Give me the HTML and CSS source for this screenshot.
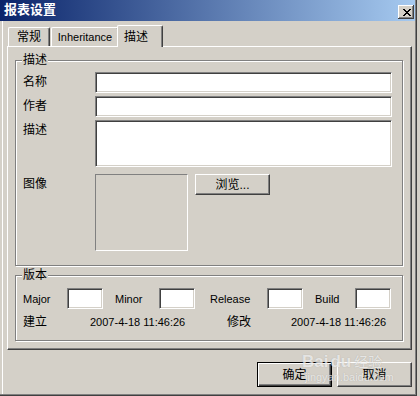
FILE: index.html
```html
<!DOCTYPE html>
<html lang="zh">
<head>
    <meta charset="UTF-8">
    <title>报表设置</title>
    <link rel="stylesheet" href="styles.css">
</head>
<body>
    <div class="window">
        <div class="titlebar">
            <span class="title">报表设置</span>
            <span class="close">
                <svg width="8" height="7" viewBox="0 0 8 7" shape-rendering="crispEdges"><path d="M0 0h2v1H0zM6 0h2v1H6zM1 1h2v1H1zM5 1h2v1H5zM2 2h4v1H2zM3 3h2v1H3zM2 4h4v1H2zM1 5h2v1H1zM5 5h2v1H5zM0 6h2v1H0zM6 6h2v1H6z"/></svg>
            </span>
        </div>

        <div class="tabs">
            <div class="tab tab-general">常规</div>
            <div class="tab tab-inherit en">Inheritance</div>
            <div class="tab tab-active">描述</div>
        </div>

        <div class="panel">
            <div class="group group-desc">
                <span class="legend">描述</span>
                <div class="desc-grid">
                    <label class="lbl">名称</label>
                    <div class="edit"></div>
                    <label class="lbl">作者</label>
                    <div class="edit"></div>
                    <label class="lbl">描述</label>
                    <div class="edit memo"></div>
                    <label class="lbl img-lbl">图像</label>
                    <div class="img-row">
                        <div class="picture"></div>
                        <button class="btn browse">浏览...</button>
                    </div>
                </div>
            </div>

            <div class="group group-ver">
                <span class="legend">版本</span>
                <div class="ver-grid en">
                    <span>Major</span>
                    <div class="edit small"></div>
                    <span>Minor</span>
                    <div class="edit small"></div>
                    <span>Release</span>
                    <div class="edit small"></div>
                    <span>Build</span>
                    <div class="edit small"></div>
                </div>
                <div class="date-grid">
                    <span>建立</span>
                    <span class="en">2007-4-18 11:46:26</span>
                    <span>修改</span>
                    <span class="en">2007-4-18 11:46:26</span>
                </div>
            </div>
        </div>

        <div class="actions">
            <button class="btn default">确定</button>
            <button class="btn">取消</button>
        </div>

        <div class="watermark">
            <div class="wm-logo">Bai<span class="wm-du">du</span><span class="wm-cn">经验</span></div>
            <div class="wm-url">jingyan.baidu.com</div>
        </div>
    </div>
</body>
</html>
```

FILE: styles.css
```css
body {
    margin: 0;
    width: 420px;
    height: 396px;
    overflow: hidden;
    background: #d4d0c8;
    font-family: "Liberation Sans", "Noto Sans CJK SC", sans-serif;
    font-size: 12px;
    line-height: 14px;
    color: #000;
}
.en {
    font-size: 11px;
}
.window {
    position: relative;
    width: 417px;
    height: 396px;
    box-sizing: border-box;
    box-shadow: inset -1px -1px 0 #404040, inset -2px -2px 0 #808080, inset 2px 0 0 #d4d0c8, inset 3px 0 0 #fff;
}
.titlebar {
    height: 21px;
    width: 415px;
    display: flex;
    justify-content: space-between;
    align-items: flex-start;
    background: linear-gradient(to right, #0a246a, #a6caf0);
}
.title {
    color: #fff;
    font-weight: bold;
    font-size: 13px;
    padding: 3px 0 0 4px;
}
.close {
    width: 16px;
    height: 14px;
    margin: 5px 1px 0 0;
    box-sizing: border-box;
    display: flex;
    justify-content: center;
    align-items: center;
    padding: 0 0 0 1px;
    background: #d4d0c8;
    box-shadow: inset -1px -1px 0 #404040, inset 1px 1px 0 #fff, inset -2px -2px 0 #808080;
}
.close svg {
    display: block;
}

/* tabs */
.tabs {
    display: flex;
    align-items: flex-end;
    height: 21px;
    margin-top: 4px;
    padding-left: 8px;
}
.tab {
    height: 19px;
    box-sizing: border-box;
    display: flex;
    justify-content: center;
    align-items: center;
    border-top: 1px solid #fff;
    border-left: 1px solid #fff;
    border-right: 1px solid #404040;
    border-radius: 2px 2px 0 0;
    box-shadow: inset -1px 0 0 #808080;
}
.tab-general {
    width: 42px;
    margin-right: 1px;
}
.tab-inherit {
    width: 68px;
}
.tab-active {
    position: relative;
    z-index: 1;
    width: 46px;
    height: 22px;
    margin-left: -2px;
    margin-bottom: -1px;
    padding: 0 8px 0 0;
    background: #d4d0c8;
}

/* panel */
.panel {
    width: 405px;
    height: 304px;
    margin-left: 7px;
    box-sizing: border-box;
    padding: 13px 8px 8px 7px;
    border: 1px solid;
    border-color: #fff #404040 #404040 #fff;
    box-shadow: inset -1px -1px 0 #808080;
}
.group {
    position: relative;
    border: 1px solid #808080;
    box-shadow: 1px 1px 0 #fff, inset 1px 1px 0 #fff;
}
.legend {
    position: absolute;
    top: -8px;
    left: 6px;
    padding: 0 1px;
    background: #d4d0c8;
}
.group-desc {
    padding: 11px 10px 14px 7px;
}
.desc-grid {
    display: grid;
    grid-template-columns: 72px 1fr;
    row-gap: 3px;
}
.lbl {
    padding-top: 3px;
}
.img-lbl,
.img-row {
    margin-top: 4px;
}
.edit {
    height: 21px;
    box-sizing: border-box;
    background: #fff;
    border: 1px solid;
    border-color: #808080 #fff #fff #808080;
    box-shadow: inset 1px 1px 0 #404040, inset -1px -1px 0 #d4d0c8;
}
.memo {
    height: 47px;
}
.img-row {
    display: flex;
    align-items: flex-start;
    gap: 7px;
}
.picture {
    width: 93px;
    height: 77px;
    box-sizing: border-box;
    border: 1px solid;
    border-color: #808080 #fff #fff #808080;
}
.btn {
    font: inherit;
    color: #000;
    background: #d4d0c8;
    width: 75px;
    height: 25px;
    padding: 0;
    box-sizing: border-box;
    border: 1px solid;
    border-color: #fff #404040 #404040 #fff;
    box-shadow: inset -1px -1px 0 #808080;
}
.browse {
    height: 21px;
}
.default {
    border-color: #000;
    box-shadow: inset 1px 1px 0 #fff, inset -1px -1px 0 #404040, inset -2px -2px 0 #808080;
}

.group-ver {
    margin-top: 9px;
    padding: 12px 0 11px 7px;
}
.ver-grid {
    display: grid;
    grid-template-columns: 44px 48px 44px 51px 57px 48px 40px 36px;
    align-items: center;
}
.small {
    width: 36px;
}
.date-grid {
    display: grid;
    grid-template-columns: 67px 137px 64px 1fr;
    margin-top: 6px;
}

.actions {
    width: 405px;
    margin: 12px 0 0 7px;
    display: flex;
    justify-content: flex-end;
    gap: 5px;
}

/* watermark from the screenshot source */
.watermark {
    position: absolute;
    left: 302px;
    top: 352px;
    color: rgba(255, 255, 255, 0.7);
    text-shadow: 0 0 1px rgba(90, 90, 90, 0.35);
    pointer-events: none;
}
.wm-logo {
    font-family: "Liberation Sans", sans-serif;
    font-weight: bold;
    font-size: 17px;
    line-height: 18px;
}
.wm-du {
    margin-left: 2px;
}
.wm-cn {
    font-family: "Noto Sans CJK SC", sans-serif;
    font-weight: normal;
    font-size: 14px;
    margin-left: 3px;
}
.wm-url {
    font-size: 11px;
    line-height: 13px;
    margin-left: 3px;
}
```
